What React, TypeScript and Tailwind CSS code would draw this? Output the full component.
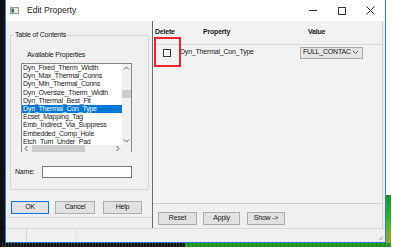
const properties = [
  "Dyn_Fixed_Therm_Width",
  "Dyn_Max_Thermal_Conns",
  "Dyn_Min_Thermal_Conns",
  "Dyn_Oversize_Therm_Width",
  "Dyn_Thermal_Best_Fit",
  "Dyn_Thermal_Con_Type",
  "Ecset_Mapping_Tag",
  "Emb_Indirect_Via_Suppress",
  "Embedded_Comp_Hole",
  "Etch_Turn_Under_Pad",
];

const arrowPaths = {
  up: "M1 4.5 L3.5 2 L6 4.5",
  down: "M1 2.5 L3.5 5 L6 2.5",
  left: "M4.5 1 L2 3.5 L4.5 6",
  right: "M2.5 1 L5 3.5 L2.5 6",
};

const Arrow = ({ dir }: { dir: keyof typeof arrowPaths }) => (
  <svg width="7" height="7" viewBox="0 0 7 7">
    <path d={arrowPaths[dir]} fill="none" stroke="#606060" strokeWidth="1" />
  </svg>
);

const Button = ({ label, w, primary }: { label: string; w: string; primary?: boolean }) => (
  <div
    className={`${w} h-[13px] flex items-center justify-center bg-[#e1e1e1] border ${
      primary ? "border-[#0078d7]" : "border-[#adadad]"
    }`}
  >
    {label}
  </div>
);

export default function App() {
  return (
    <div className="relative w-[393px] h-[252px] bg-white overflow-hidden font-['Liberation_Sans',Arial,sans-serif] text-[7px] tracking-[-0.2px] text-[#1a1a1a]">
      <div className="flex h-[243px]">
        <div className="w-[5px] bg-[#101010]"></div>

        {/* dialog window */}
        <div className="w-[381px] flex flex-col border-x border-b border-[#2d7fd3]">
          <div className="h-[21px] bg-white flex items-center">
            <svg width="9" height="7" viewBox="0 0 9 7" className="ml-[4px]">
              <rect x="0.5" y="0.5" width="8" height="6" fill="#e8e8e8" stroke="#9a9a9a" />
              <rect x="1.5" y="1.5" width="2.5" height="4" fill="#2f6b55" />
            </svg>
            <span className="ml-[8px] text-[8.5px] tracking-normal text-[#222]">Edit Property</span>
            <div className="ml-auto flex h-full">
              <div className="w-[29px] flex items-center justify-center">
                <div className="w-[8px] h-px bg-[#333]"></div>
              </div>
              <div className="w-[29px] flex items-center justify-center">
                <div className="w-[8px] h-[8px] border border-[#333]"></div>
              </div>
              <div className="w-[29px] flex items-center justify-center">
                <svg width="9" height="9" viewBox="0 0 9 9">
                  <path d="M0.5 0.5 L8.5 8.5 M8.5 0.5 L0.5 8.5" stroke="#333" strokeWidth="1" />
                </svg>
              </div>
            </div>
          </div>

          <div className="flex-1 bg-[#f0f0f0] flex flex-col">
            <div className="h-[207px] flex">
              {/* left pane */}
              <div className="w-[146px] pl-[4px] pr-[3px] flex flex-col border-b border-[#dcdcdc] h-[197px]">
                <fieldset className="mt-[10px] h-[159px] border border-[#d6d6d6] px-[3px]">
                  <legend className="px-[1px] leading-[8px]">Table of Contents</legend>
                  <div className="mt-[12px] ml-[13px] leading-[8px]">Available Properties</div>
                  <div className="mt-[4px] ml-[7px] w-[111px] h-[89px] border border-[#82878f] bg-white flex flex-col">
                    <div className="flex h-[81px]">
                      <div className="w-[100px] overflow-hidden">
                        {properties.map((p) => (
                          <div
                            key={p}
                            className={`h-[8.2px] leading-[8.2px] pl-[1px] whitespace-nowrap ${
                              p === "Dyn_Thermal_Con_Type" ? "bg-[#0078d7] text-white" : ""
                            }`}
                          >
                            {p}
                          </div>
                        ))}
                      </div>
                      <div className="w-[9px] bg-[#f0f0f0] flex flex-col items-center">
                        <div className="h-[9px] flex items-center"><Arrow dir="up" /></div>
                        <div className="mt-[17px] w-[9px] h-[8px] bg-[#cdcdcd]"></div>
                        <div className="mt-auto h-[9px] flex items-center"><Arrow dir="down" /></div>
                      </div>
                    </div>
                    <div className="flex h-[7px]">
                      <div className="w-[100px] bg-[#f0f0f0] flex items-center">
                        <div className="w-[9px] flex justify-center"><Arrow dir="left" /></div>
                        <div className="ml-[1px] w-[53px] h-[7px] bg-[#cdcdcd]"></div>
                        <div className="ml-auto w-[9px] flex justify-center"><Arrow dir="right" /></div>
                      </div>
                      <div className="w-[9px] bg-[#f0f0f0]"></div>
                    </div>
                  </div>
                  <div className="mt-[14px] ml-[1px] flex items-center">
                    <span className="w-[27px]">Name:</span>
                    <div className="w-[90px] h-[12px] bg-white border border-[#7a7a7a]"></div>
                  </div>
                </fieldset>
                <div className="mt-[11px] ml-[1px] flex">
                  <Button label="OK" w="w-[38px]" primary />
                  <div className="ml-[6px]"><Button label="Cancel" w="w-[40px]" /></div>
                  <div className="ml-[8px]"><Button label="Help" w="w-[39px]" /></div>
                </div>
              </div>

              {/* right pane */}
              <div className="w-[231px] flex flex-col border-l border-[#6b6b6b] border-r border-r-[#cfcfcf]">
                <div className="h-[183px] border-b border-[#cfcfcf] bg-[#f2f2f2]">
                  <div className="h-[24px] flex items-center border-b border-[#d7d7d7] font-bold">
                    <span className="w-[50px] pl-[2px]">Delete</span>
                    <span className="w-[105px]">Property</span>
                    <span>Value</span>
                  </div>
                  <div className="h-[15px] flex items-center">
                    <div className="ml-[10px] w-[8px] h-[8px] bg-white border border-[#333]"></div>
                    <span className="ml-[9px] w-[120px]">Dyn_Thermal_Con_Type</span>
                    <div className="w-[63px] h-[12px] flex items-center bg-[#e5e5e5] border border-[#acacac] pl-[2px]">
                      <span>FULL_CONTAC</span>
                      <svg width="7" height="5" viewBox="0 0 7 5" className="ml-auto mr-[3px]">
                        <path d="M1 1 L3.5 3.5 L6 1" fill="none" stroke="#555" strokeWidth="1" />
                      </svg>
                    </div>
                  </div>
                </div>
                <div className="flex-1 flex items-start pt-[8px] pl-[5px]">
                  <Button label="Reset" w="w-[39px]" />
                  <div className="ml-[6px]"><Button label="Apply" w="w-[37px]" /></div>
                  <div className="ml-[7px]"><Button label="Show ->" w="w-[38px]" /></div>
                </div>
              </div>
            </div>

            {/* status bar */}
            <div className="flex-1 flex border-t border-[#d9d9d9]">
              <div className="w-[21px] border-r border-[#d9d9d9]"></div>
              <div className="w-[50px] border-r border-[#e2e2e2]"></div>
              <div className="ml-auto self-end mr-[1px] mb-[1px]">
                <svg width="6" height="6" viewBox="0 0 6 6">
                  <path d="M5 1 L1 5 M5 3 L3 5" stroke="#b5b5b5" strokeWidth="1" />
                </svg>
              </div>
            </div>
          </div>
        </div>

        <div className="w-[7px] flex flex-col">
          <div className="h-[195px] bg-white"></div>
          <div className="w-[5px] flex-1 bg-gradient-to-b from-[#1f8f2a] via-[#2fb52f] to-[#9aa12a]"></div>
        </div>
      </div>

      <div className="flex h-[4px] w-[391px]">
        <div className="w-[185px] bg-[repeating-linear-gradient(90deg,#111_0,#111_2px,#3a3a3a_2px,#3a3a3a_3px)]"></div>
        <div className="flex-1 bg-[repeating-linear-gradient(90deg,#2a9e2a_0,#2a9e2a_3px,#1d7a1d_3px,#1d7a1d_4px)]"></div>
      </div>

      {/* red highlight annotation */}
      <div className="absolute left-[154px] top-[37px] w-[27px] h-[30px] border-2 border-[#e8262c]"></div>
    </div>
  );
}
